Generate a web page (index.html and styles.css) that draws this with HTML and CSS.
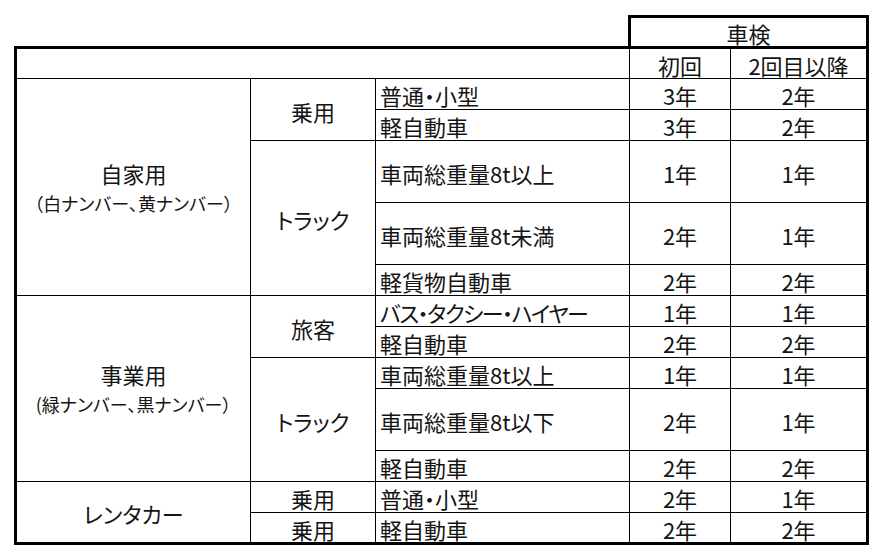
FILE: index.html
```html
<!DOCTYPE html>
<html lang="ja">
<head>
<meta charset="utf-8">
<link rel="stylesheet" href="styles.css">
</head>
<body>
<table class="sheet">
  <colgroup>
    <col class="c1"><col class="c2"><col class="c3"><col class="c4"><col class="c5">
  </colgroup>
  <tr class="r">
    <td class="blank" colspan="3"></td>
    <td class="cap" colspan="2">車検</td>
  </tr>
  <tr class="r hd">
    <td class="first wide" colspan="3"></td>
    <td class="num">初回</td>
    <td class="num last">2回目以降</td>
  </tr>
  <tr class="r">
    <td class="first grp" rowspan="5"><div class="g1">自家用</div><div class="g2">（白ナンバー、黄ナンバー）</div></td>
    <td class="mid" rowspan="2">乗用</td>
    <td class="kind">普通・小型</td>
    <td class="num">3年</td><td class="num last">2年</td>
  </tr>
  <tr class="r">
    <td class="kind">軽自動車</td>
    <td class="num">3年</td><td class="num last">2年</td>
  </tr>
  <tr class="rr">
    <td class="mid" rowspan="3">トラック</td>
    <td class="kind">車両総重量8t以上</td>
    <td class="num">1年</td><td class="num last">1年</td>
  </tr>
  <tr class="rr">
    <td class="kind">車両総重量8t未満</td>
    <td class="num">2年</td><td class="num last">1年</td>
  </tr>
  <tr class="r">
    <td class="kind">軽貨物自動車</td>
    <td class="num">2年</td><td class="num last">2年</td>
  </tr>
  <tr class="r">
    <td class="first grp" rowspan="5"><div class="g1">事業用</div><div class="g2">(緑ナンバー、黒ナンバー）</div></td>
    <td class="mid" rowspan="2">旅客</td>
    <td class="kind kana">バス・タクシー・ハイヤー</td>
    <td class="num">1年</td><td class="num last">1年</td>
  </tr>
  <tr class="r">
    <td class="kind">軽自動車</td>
    <td class="num">2年</td><td class="num last">2年</td>
  </tr>
  <tr class="r">
    <td class="mid" rowspan="3">トラック</td>
    <td class="kind">車両総重量8t以上</td>
    <td class="num">1年</td><td class="num last">1年</td>
  </tr>
  <tr class="rr">
    <td class="kind">車両総重量8t以下</td>
    <td class="num">2年</td><td class="num last">1年</td>
  </tr>
  <tr class="r">
    <td class="kind">軽自動車</td>
    <td class="num">2年</td><td class="num last">2年</td>
  </tr>
  <tr class="r">
    <td class="first grp bottom" rowspan="2"><div class="g1">レンタカー</div></td>
    <td class="mid">乗用</td>
    <td class="kind">普通・小型</td>
    <td class="num">2年</td><td class="num last">1年</td>
  </tr>
  <tr class="r end">
    <td class="mid">乗用</td>
    <td class="kind">軽自動車</td>
    <td class="num">2年</td><td class="num last">2年</td>
  </tr>
</table>
</body>
</html>
```
FILE: styles.css
```css
html, body {
  margin: 0;
  padding: 0;
  background: #ffffff;
}
body {
  font-family: "Noto Sans CJK JP", "Noto Sans", sans-serif;
  color: #141414;
  font-feature-settings: "palt";
}
.sheet {
  border-collapse: collapse;
  table-layout: fixed;
  margin: 15px 0 0 14px;
  width: 852px;
}
.c1 { width: 235px; }
.c2 { width: 125px; }
.c3 { width: 254px; }
.c4 { width: 101px; }
.c5 { width: 137px; }
td {
  border: 1px solid #000;
  padding: 2px 0 0 0;
  font-size: 22px;
  line-height: 26px;
  text-align: center;
  vertical-align: middle;
  white-space: nowrap;
}
.r { height: 31px; }
.rr { height: 62px; }
td.blank {
  border: none;
}
td.cap {
  border-top: 3px solid #000;
  border-left: 3px solid #000;
  border-right: 3px solid #000;
}
.hd td {
  border-top: 3px solid #000;
}
td.first { border-left: 3px solid #000; }
td.last { border-right: 3px solid #000; }
.end td { border-bottom: 3px solid #000; }
td.bottom { border-bottom: 3px solid #000; }
td.kind {
  text-align: left;
  padding-left: 4px;
}
td.kana {
  letter-spacing: -1.5px;
}
.g1 {
  font-size: 22px;
  line-height: 30px;
}
.g2 {
  font-size: 18px;
  line-height: 31px;
}
```
